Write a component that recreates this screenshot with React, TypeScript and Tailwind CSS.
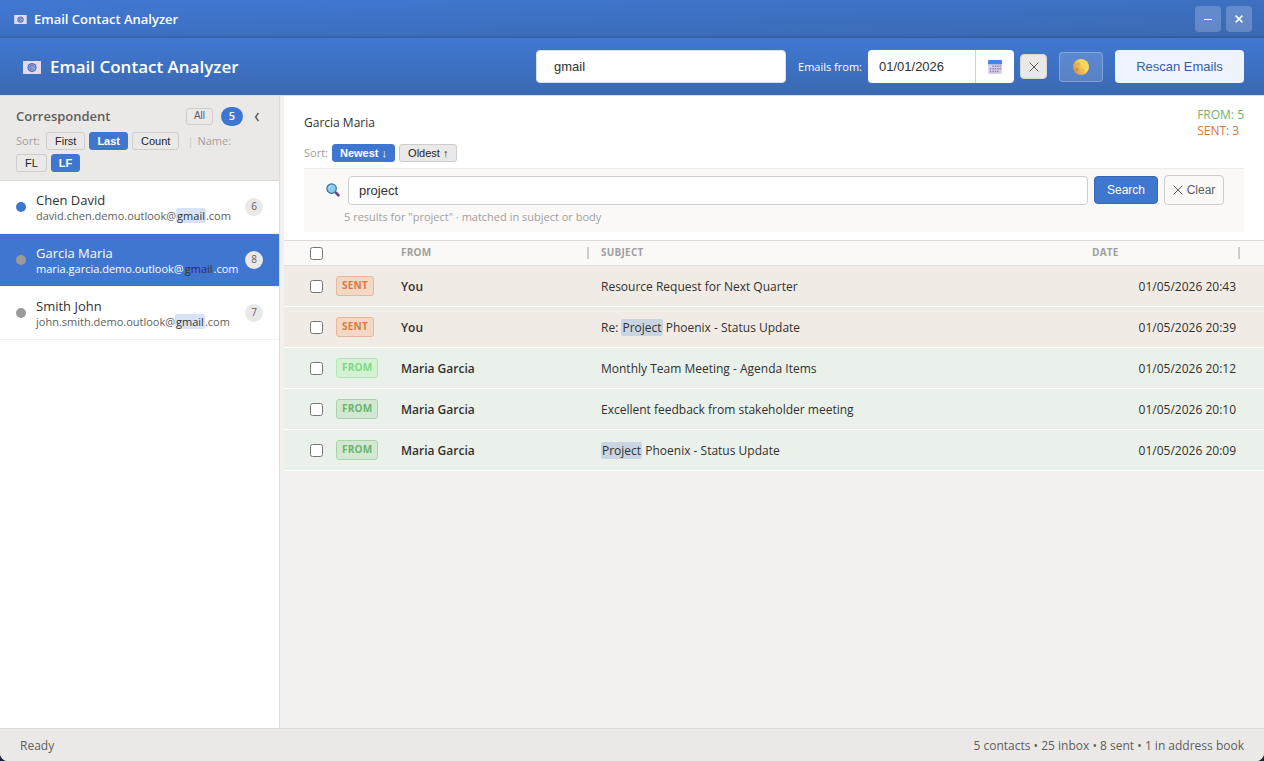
import { useState } from "react";
import clsx from "clsx";

type TContact = {
  name: string;
  email: [string, string, string];
  count: number;
  isNew?: boolean;
};

type TEmail = {
  id: number;
  type: "sent" | "from";
  from: string;
  subject: string;
  date: string;
  fresh?: boolean;
};

const contacts: TContact[] = [
  {
    name: "Chen David",
    email: ["david.chen.demo.outlook@", "gmail", ".com"],
    count: 6,
    isNew: true,
  },
  {
    name: "Garcia Maria",
    email: ["maria.garcia.demo.outlook@", "gmail", ".com"],
    count: 8,
  },
  {
    name: "Smith John",
    email: ["john.smith.demo.outlook@", "gmail", ".com"],
    count: 7,
  },
];

const emails: TEmail[] = [
  {
    id: 1,
    type: "sent",
    from: "You",
    subject: "Resource Request for Next Quarter",
    date: "01/05/2026 20:43",
  },
  {
    id: 2,
    type: "sent",
    from: "You",
    subject: "Re: Project Phoenix - Status Update",
    date: "01/05/2026 20:39",
  },
  {
    id: 3,
    type: "from",
    from: "Maria Garcia",
    subject: "Monthly Team Meeting - Agenda Items",
    date: "01/05/2026 20:12",
    fresh: true,
  },
  {
    id: 4,
    type: "from",
    from: "Maria Garcia",
    subject: "Excellent feedback from stakeholder meeting",
    date: "01/05/2026 20:10",
  },
  {
    id: 5,
    type: "from",
    from: "Maria Garcia",
    subject: "Project Phoenix - Status Update",
    date: "01/05/2026 20:09",
  },
];

const MailIcon = ({ className }: { className: string }) => (
  <svg viewBox="0 0 18 13" className={className} aria-hidden="true">
    <rect width="18" height="13" rx="0.6" fill="#e6dcf2" />
    <path d="M0 13 L6 7 M18 13 L12 7 M0 0 L5 4 M18 0 L13 4" stroke="#d6cbe8" strokeWidth="0.7" />
    <circle cx="9" cy="6.6" r="4.6" fill="#5573bd" />
    <circle cx="9" cy="6.6" r="3" fill="none" stroke="#9fadde" strokeWidth="0.8" />
    <circle cx="9" cy="6.6" r="1.1" fill="none" stroke="#b9c2ea" strokeWidth="0.8" />
    <path d="M10.2 5.4 V7.4 Q11 8.4 11.8 7.2" fill="none" stroke="#b9c2ea" strokeWidth="0.7" />
  </svg>
);

const CalendarIcon = () => (
  <svg viewBox="0 0 14 14" className="h-3.5 w-3.5" aria-hidden="true">
    <rect width="14" height="14" rx="1.4" fill="#d9d0ea" />
    <path d="M0 4.2 V1.4 Q0 0 1.4 0 H12.6 Q14 0 14 1.4 V4.2 Z" fill="#3f86e8" />
    <g fill="#8f7fb8">
      <path d="M4.4 5.4h1.5v1.5h-1.5z M6.8 5.4h1.5v1.5h-1.5z M9.2 5.4h1.5v1.5h-1.5z M11.5 5.4h1.3v1.5h-1.3z" />
      <path d="M1.8 8h1.5v1.5h-1.5z M4.4 8h1.5v1.5h-1.5z M6.8 8h1.5v1.5h-1.5z M9.2 8h1.5v1.5h-1.5z M11.5 8h1.3v1.5h-1.3z" />
      <path d="M1.8 10.7h1.5v1.5h-1.5z M4.4 10.7h1.5v1.5h-1.5z M6.8 10.7h1.5v1.5h-1.5z M9.2 10.7h1.5v1.5h-1.5z" />
    </g>
  </svg>
);

const MoonIcon = () => (
  <svg viewBox="0 0 16 16" className="h-4 w-4" aria-hidden="true">
    <defs>
      <linearGradient id="moon" x1="1" y1="0.2" x2="0" y2="0.8">
        <stop offset="0.35" stopColor="#fbd960" />
        <stop offset="1" stopColor="#cf8a45" />
      </linearGradient>
    </defs>
    <circle cx="8" cy="8" r="8" fill="url(#moon)" />
    <circle cx="5.6" cy="5" r="1.5" fill="#e3ad4c" />
    <circle cx="4" cy="10.4" r="1.2" fill="#c07f42" />
    <circle cx="11" cy="4.2" r="0.9" fill="#f0c453" />
    <circle cx="9.8" cy="10.8" r="1.4" fill="#ecb94c" />
    <circle cx="13" cy="8.2" r="0.7" fill="#f0c453" />
  </svg>
);

const SearchIcon = () => (
  <svg viewBox="0 0 14 14" className="h-3.5 w-3.5" aria-hidden="true">
    <path d="M8.6 8.8 L10 10.2" stroke="#4a6a86" strokeWidth="1.6" />
    <path d="M10.2 10 L12.4 12.2" stroke="#6d4a80" strokeWidth="2.7" strokeLinecap="round" />
    <circle cx="5.6" cy="5.6" r="4.7" fill="#86cdf0" stroke="#3e6f93" strokeWidth="1.2" />
    <path d="M3 5.2 Q3.4 3.2 5.4 2.9" fill="none" stroke="#c4e9fb" strokeWidth="0.9" />
  </svg>
);

const CrossIcon = () => (
  <svg viewBox="0 0 10 10" className="h-2.5 w-2.5" aria-hidden="true">
    <path d="M0.6 0.6 L9.4 9.4 M9.4 0.6 L0.6 9.4" stroke="currentColor" strokeWidth="1" />
  </svg>
);

const SortButton = ({
  label,
  active,
  filled,
  onClick,
}: {
  label: string;
  active: boolean;
  filled?: boolean;
  onClick: () => void;
}) => (
  <button
    type="button"
    onClick={onClick}
    className={clsx(
      "flex h-[18px] cursor-pointer items-center rounded-[3px] border font-['Liberation_Sans',sans-serif] text-[11px] leading-4",
      active
        ? "border-[#3f76cf] bg-[#3f76cf] px-[7px] font-bold text-white"
        : "border-[#cfcdcb] px-2 text-[#252423]",
      !active && filled && "bg-[#ebe9e8]"
    )}
  >
    {label}
  </button>
);

const Highlight = ({ text }: { text: string }) => (
  <>
    {text.split(/(Project)/).map((part, i) =>
      part === "Project" ? (
        <mark key={i} className="rounded-xs bg-[#c9d5e3] px-px text-[#323130]">
          {part}
        </mark>
      ) : (
        part
      )
    )}
  </>
);

const App = () => {
  const [contactQuery, setContactQuery] = useState("gmail");
  const [fromDate, setFromDate] = useState("01/01/2026");
  const [emailQuery, setEmailQuery] = useState("project");
  const [selected, setSelected] = useState("Garcia Maria");
  const [sortBy, setSortBy] = useState("Last");
  const [nameOrder, setNameOrder] = useState("LF");
  const [emailSort, setEmailSort] = useState("newest");

  return (
    <div className="min-h-screen bg-[#1b2130]">
      <div className="flex min-h-screen flex-col overflow-hidden rounded-b-lg bg-[#f3f1f0] font-['Open_Sans','Noto_Sans',sans-serif] text-xs text-[#323130]">
        {/* window title bar */}
        <div className="flex h-[38px] items-center justify-between bg-linear-to-br from-[#4078d2] to-[#3b69b3] pr-3 pl-3.5 shadow-[inset_0_-3px_3px_-2px_rgba(0,0,0,0.2)]">
          <div className="flex items-center gap-[7px] pt-0.5 text-white">
            <MailIcon className="h-[9px] w-[13px]" />
            <span className="text-[13px] font-semibold">Email Contact Analyzer</span>
          </div>
          <div className="flex gap-[5px]">
            <button
              type="button"
              aria-label="Minimize"
              className="flex h-[26px] w-[26px] items-center justify-center rounded bg-white/20 text-white"
            >
              <svg viewBox="0 0 10 10" className="h-2.5 w-2.5">
                <path d="M1 5.5 H9" stroke="currentColor" strokeWidth="1" />
              </svg>
            </button>
            <button
              type="button"
              aria-label="Close"
              className="flex h-[26px] w-[26px] items-center justify-center rounded bg-white/20 text-white"
            >
              <svg viewBox="0 0 10 10" className="h-2.5 w-2.5">
                <path d="M1.6 1.6 L8.4 8.4 M8.4 1.6 L1.6 8.4" stroke="currentColor" strokeWidth="1.5" />
              </svg>
            </button>
          </div>
        </div>

        {/* app header */}
        <header className="flex h-[58px] items-center border-b border-[#cfe0fa] bg-linear-to-b from-[#4078d2] to-[#3b69b3] pr-5 pl-[23px]">
          <div className="flex flex-1 items-center gap-[9px] pt-0.5 text-white">
            <MailIcon className="h-[13px] w-[18px]" />
            <h1 className="text-[17px] font-semibold">Email Contact Analyzer</h1>
          </div>
          <div className="flex items-center gap-3">
            <input
              type="text"
              aria-label="Search contacts"
              value={contactQuery}
              onChange={(e) => setContactQuery(e.target.value)}
              className="h-[33px] w-[250px] rounded border border-[#d6e0f0] bg-white px-[17px] font-['Liberation_Sans',sans-serif] text-[13px] outline-none"
            />
            <div className="flex items-center gap-1.5">
              <label htmlFor="from-date" className="pt-0.5 text-[11px] text-white">
                Emails from:
              </label>
              <div className="flex h-[33px] overflow-hidden rounded bg-white">
                <input
                  id="from-date"
                  type="text"
                  value={fromDate}
                  onChange={(e) => setFromDate(e.target.value)}
                  className="w-[108px] border-r border-[#d0d0d0] px-[11px] font-['Liberation_Sans',sans-serif] text-[13px] outline-none"
                />
                <button
                  type="button"
                  aria-label="Pick a date"
                  className="flex w-[38px] items-center justify-center"
                >
                  <CalendarIcon />
                </button>
              </div>
              <button
                type="button"
                aria-label="Clear date"
                className="flex h-[25px] w-[27px] items-center justify-center rounded border border-[#d8d6d4] bg-[#ebe9e8] text-[#605e5c]"
              >
                <CrossIcon />
              </button>
            </div>
            <button
              type="button"
              aria-label="Toggle theme"
              className="flex h-[30px] w-11 items-center justify-center rounded border border-white/25 bg-white/15"
            >
              <MoonIcon />
            </button>
            <button
              type="button"
              className="h-[33px] w-[129px] rounded bg-[#eff3fb] font-['Liberation_Sans',sans-serif] text-[13px] text-[#345ea3]"
            >
              Rescan Emails
            </button>
          </div>
        </header>

        <main className="flex flex-1">
          {/* contacts */}
          <aside className="w-[280px] shrink-0 border-r border-[#dddbd9] bg-white">
            <div className="border-b border-[#dddbd9] bg-[#ebe9e8] px-4 pt-2.5 pb-2">
              <div className="flex h-5 items-center">
                <h2 className="flex-1 pt-0.5 text-[13px] font-semibold text-[#605e5c]">
                  Correspondent
                </h2>
                <button
                  type="button"
                  className="h-[17px] w-[27px] rounded-[3px] border border-[#cfcdcb] font-['Liberation_Sans',sans-serif] text-[10px] leading-3 text-[#605e5c]"
                >
                  All
                </button>
                <span className="ml-2 flex h-[19px] w-[22px] items-center justify-center rounded-full bg-[#3f76cf] text-[11px] font-semibold text-white">
                  5
                </span>
                <button
                  type="button"
                  aria-label="Collapse"
                  className="ml-2 flex h-5 w-3 items-center justify-center pt-0.5 text-[#605e5c]"
                >
                  <svg viewBox="0 0 6 10" className="h-2.5 w-1.5">
                    <path d="M4.4 0.8 L1.6 5 L4.4 9.2" fill="none" stroke="currentColor" strokeWidth="1.5" />
                  </svg>
                </button>
              </div>
              <div className="mt-1.5 flex flex-wrap items-center gap-1 text-[11px] leading-4 text-[#a19f9d]">
                <span className="w-[26px]">Sort:</span>
                {["First", "Last", "Count"].map((item) => (
                  <SortButton
                    key={item}
                    label={item}
                    active={sortBy === item}
                    onClick={() => setSortBy(item)}
                  />
                ))}
                <span className="ml-1 text-[#c8c6c4]">|</span>
                <span>Name:</span>
                <div className="flex basis-full gap-1">
                  {["FL", "LF"].map((item) => (
                    <SortButton
                      key={item}
                      label={item}
                      active={nameOrder === item}
                      onClick={() => setNameOrder(item)}
                    />
                  ))}
                </div>
              </div>
            </div>
            <ul>
              {contacts.map((contact) => {
                const isSelected = selected === contact.name;
                return (
                  <li key={contact.name}>
                    <button
                      type="button"
                      onClick={() => setSelected(contact.name)}
                      className={clsx(
                        "flex h-[53px] w-full items-center border-b border-[#f3f1f0] px-4 text-left",
                        isSelected && "bg-[#3f76cf] text-white"
                      )}
                    >
                      <span
                        className={clsx(
                          "mr-2.5 h-2.5 w-2.5 rounded-full",
                          contact.isNew ? "bg-[#3f76cf]" : "bg-[#9d9b99]"
                        )}
                      />
                      <span className="flex-1 pt-0.5">
                        <span className="block text-[13px] leading-4">{contact.name}</span>
                        <span
                          className={clsx(
                            "block text-[11px] leading-4",
                            !isSelected && "text-[#605e5c]"
                          )}
                        >
                          {contact.email[0]}
                          <mark
                            className={clsx(
                              "rounded-xs px-px text-[#323130]",
                              isSelected ? "bg-transparent" : "bg-[#d8e4f5]"
                            )}
                          >
                            {contact.email[1]}
                          </mark>
                          {contact.email[2]}
                        </span>
                      </span>
                      <span className="flex h-[18px] w-[18px] items-center justify-center rounded-full bg-[#ebe9e8] text-[10px] text-[#605e5c]">
                        {contact.count}
                      </span>
                    </button>
                  </li>
                );
              })}
            </ul>
          </aside>
          <div className="w-1 shrink-0 cursor-col-resize bg-[#f3f1f0]" />

          {/* emails */}
          <section className="min-w-0 flex-1">
            <div className="bg-white px-5 pt-[11px] pb-2">
              <div className="flex h-8 items-center justify-between">
                <h2>{selected}</h2>
                <div className="leading-4">
                  <div className="text-[#6bb56b]">FROM: 5</div>
                  <div className="text-[#d0763f]">SENT: 3</div>
                </div>
              </div>
              <div className="mt-[5px] flex items-center gap-1 text-[11px] leading-4 text-[#a19f9d]">
                <span className="w-6">Sort:</span>
                <SortButton
                  label="Newest ↓"
                  filled
                  active={emailSort === "newest"}
                  onClick={() => setEmailSort("newest")}
                />
                <SortButton
                  label="Oldest ↑"
                  filled
                  active={emailSort === "oldest"}
                  onClick={() => setEmailSort("oldest")}
                />
              </div>
              <div className="mt-1.5 h-16 border-t border-[#eeecea] bg-[#faf9f8] px-5 pt-1.5">
                <form
                  onSubmit={(e) => e.preventDefault()}
                  className="flex items-center gap-1.5 pl-0.5"
                >
                  <label htmlFor="email-search" aria-label="Search emails" className="mr-0.5">
                    <SearchIcon />
                  </label>
                  <input
                    id="email-search"
                    type="text"
                    value={emailQuery}
                    onChange={(e) => setEmailQuery(e.target.value)}
                    className="h-[29px] min-w-0 flex-1 rounded border border-[#cfcdcb] bg-white px-2.5 font-['Liberation_Sans',sans-serif] text-[13px] outline-none"
                  />
                  <button
                    type="submit"
                    className="h-7 w-16 rounded border border-[#3565b5] bg-[#3f76cf] font-['Liberation_Sans',sans-serif] text-white"
                  >
                    Search
                  </button>
                  <button
                    type="button"
                    onClick={() => setEmailQuery("")}
                    className="flex h-[30px] w-[60px] items-center justify-center gap-1 rounded border border-[#cfcdcb] font-['Liberation_Sans',sans-serif] text-[#605e5c]"
                  >
                    <CrossIcon />
                    Clear
                  </button>
                </form>
                <p className="mt-1 pl-5 text-[11px] leading-4 text-[#a19f9d]">
                  5 results for "project" · matched in subject or body
                </p>
              </div>
            </div>

            <table className="w-full table-fixed border-collapse text-left">
              <colgroup>
                <col className="w-[52px]" />
                <col className="w-[65px]" />
                <col className="w-[200px]" />
                <col />
                <col className="w-[172px]" />
              </colgroup>
              <thead>
                <tr className="h-[25px] border-y border-[#dddbd9] bg-[#faf9f8] text-[10px] tracking-wide text-[#a19f9d]">
                  <th className="pl-[26px]">
                    <input type="checkbox" aria-label="Select all" className="block" />
                  </th>
                  <th />
                  <th className="font-bold">
                    <div className="flex items-center justify-between pr-3">
                      FROM
                      <span className="h-3 w-0.5 bg-[#cfcdcb]" />
                    </div>
                  </th>
                  <th className="font-bold">SUBJECT</th>
                  <th className="font-bold">
                    <div className="flex items-center justify-between pr-6">
                      DATE
                      <span className="h-3 w-0.5 bg-[#cfcdcb]" />
                    </div>
                  </th>
                </tr>
              </thead>
              <tbody>
                {emails.map((email) => (
                  <tr
                    key={email.id}
                    className={clsx(
                      "h-[41px] border-b border-white",
                      email.type === "sent" ? "bg-[#f1ebe5]" : "bg-[#eaf0ea]"
                    )}
                  >
                    <td className="pl-[26px]">
                      <input
                        type="checkbox"
                        aria-label={`Select ${email.subject}`}
                        className="block"
                      />
                    </td>
                    <td>
                      <span
                        className={clsx(
                          "inline-flex h-5 items-center rounded-[3px] border px-[5px] text-[10px] font-bold tracking-wide",
                          email.type === "sent" && "border-[#e9b698] bg-[#f4d8c6] text-[#d9783f]",
                          email.type === "from" &&
                            (email.fresh
                              ? "border-[#b5e6b8] bg-[#d2f2d3] text-[#7fd884]"
                              : "border-[#a9d4ab] bg-[#d2e8d2] text-[#6bb56b]")
                        )}
                      >
                        {email.type.toUpperCase()}
                      </span>
                    </td>
                    <td className="pt-0.5 font-semibold">{email.from}</td>
                    <td className="truncate pt-0.5">
                      <Highlight text={email.subject} />
                    </td>
                    <td className="pt-0.5 pr-7 text-right">{email.date}</td>
                  </tr>
                ))}
              </tbody>
            </table>
          </section>
        </main>

        <footer className="flex h-[33px] items-center justify-between border-t border-[#dddbd9] bg-[#ebe9e8] px-5 pt-0.5 text-[#605e5c]">
          <span>Ready</span>
          <span>5 contacts • 25 inbox • 8 sent • 1 in address book</span>
        </footer>
      </div>
    </div>
  );
};

export default App;
